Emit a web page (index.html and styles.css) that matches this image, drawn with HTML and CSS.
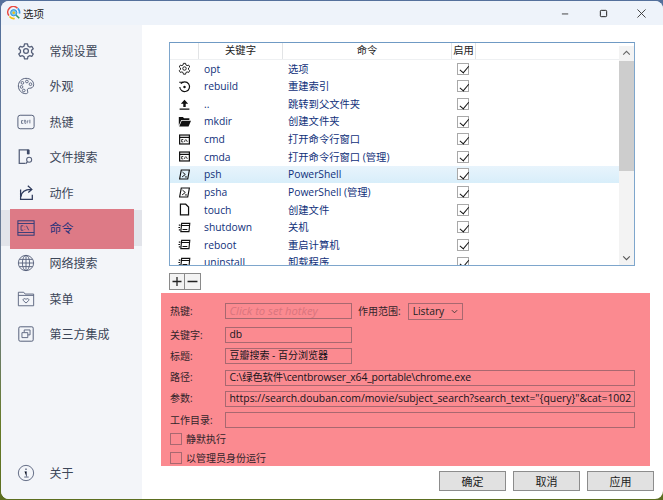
FILE: index.html
```html
<!DOCTYPE html>
<html lang="zh">
<head>
<meta charset="utf-8">
<title>选项</title>
<link rel="stylesheet" href="styles.css">
</head>
<body>
<svg class="defs" width="0" height="0" aria-hidden="true">
  <defs>
    <symbol id="i-gear" viewBox="0 0 24 24"><path fill="none" stroke="currentColor" stroke-width="1.700" stroke-linejoin="round" d="M10 2.500h4l.6 3 2.200 1.200 2.900-1 2 3.400-2.300 2v2.800l2.300 2-2 3.400-2.900-1-2.200 1.200-.6 3h-4l-.6-3-2.200-1.200-2.900 1-2-3.400 2.300-2v-2.800l-2.300-2 2-3.400 2.900 1 2.200-1.200z"/><circle cx="12" cy="12" r="3.200" fill="none" stroke="currentColor" stroke-width="1.700"/></symbol>
    <symbol id="i-console" viewBox="0 0 16 16"><rect x="2" y="2.500" width="12" height="11" fill="none" stroke="currentColor" stroke-width="1.500"/><path stroke="currentColor" stroke-width="1.500" d="M2 5.500h12"/><path fill="none" stroke="currentColor" d="M6.500 8h-2v3h2M8 11l1-3M10 8l1.500 3"/></symbol>
    <symbol id="i-ps" viewBox="0 0 16 16"><path fill="none" stroke="currentColor" stroke-width="1.400" d="M4 2.500h10l-2 11H2z"/><path fill="none" stroke="currentColor" stroke-width="1.200" d="M5.500 5l3.500 3-4 3M8.500 11h2.500"/></symbol>
    <symbol id="i-power" viewBox="0 0 16 16"><path fill="none" stroke="currentColor" stroke-width="1.400" d="M4.500 3h10l-1 10h-10z"/><path stroke="currentColor" stroke-width="1.400" d="M4.300 5.500h10M5.500 10.500h6M1 5h2M.5 8h2M1 11h2"/></symbol>
  </defs>
</svg>
<div class="window">
  <header class="titlebar">
    <div class="title">
      <svg class="logo" viewBox="0 0 16 16"><path fill="none" stroke="#e8483f" stroke-width="1.800" d="M2.200 11A6.500 6.500 0 0 1 12 2.500"/><path fill="none" stroke="#f4c20d" stroke-width="1.800" d="M2.800 12a6.500 6.500 0 0 0 6 2.300"/><path fill="none" stroke="#3b9be8" stroke-width="1.800" d="M12.300 2.800a6.500 6.500 0 0 1 2 6"/><circle cx="7.700" cy="7.700" r="3.600" fill="#7fc6ea" stroke="#1f8fd8"/><circle cx="7.700" cy="7.700" r="1.400" fill="#f4c20d"/><path stroke="#2f9a5b" stroke-width="1.800" d="M10.500 10.500l3.500 3.500"/></svg>
      <span>选项</span>
    </div>
    <div class="controls">
      <svg viewBox="0 0 10 10"><path stroke="#333" d="M1 5.500h7"/></svg>
      <svg viewBox="0 0 10 10"><rect x="1.500" y="1.500" width="7" height="7" rx="1" fill="none" stroke="#222" stroke-width="1.100"/></svg>
      <svg viewBox="0 0 10 10"><path stroke="#333" d="M.5.500l9 9M9.500.500l-9 9"/></svg>
    </div>
  </header>
  <div class="content">
    <nav class="sidebar">
      <a class="nav-item"><svg class="nav-icon"><use href="#i-gear"/></svg><span>常规设置</span></a>
      <a class="nav-item"><svg class="nav-icon" viewBox="0 0 20 20"><path fill="none" stroke="currentColor" stroke-width="1.100" d="M10 1.500c5 0 8.500 3 8.500 7 0 3-2.500 4-4.500 4-1.500 0-2.500.6-2.500 2 0 1 .5 1.500.5 2.500 0 1-1 1.500-2.200 1.500C5 18.500 1.500 14.500 1.500 10 1.500 5.500 5 1.500 10 1.500z"/><g fill="none" stroke="currentColor"><circle cx="6" cy="6.500" r="1.500"/><circle cx="11" cy="5" r="1.500"/><circle cx="15" cy="8" r="1.500"/><circle cx="5" cy="11" r="1.500"/><circle cx="7.500" cy="15" r="1.500"/></g></svg><span>外观</span></a>
      <a class="nav-item"><svg class="nav-icon" viewBox="0 0 20 20"><rect x="1" y="2.500" width="18" height="15" rx="2.500" fill="none" stroke="currentColor" stroke-width="1.100"/><path fill="none" stroke="currentColor" stroke-width=".9" d="M7 8.500H5v3h2M8.800 7.500v4h1M8 8.800h2M11.300 11.500V8.800h1.400M14.300 7.500v4"/></svg><span>热键</span></a>
      <a class="nav-item"><svg class="nav-icon" viewBox="0 0 20 20"><path fill="none" stroke="currentColor" stroke-width="1.400" d="M9 17H2.500V2h10v5"/><path fill="#3e4a68" d="M11 2h3v5h-3z"/><circle cx="13.500" cy="13" r="2.800" fill="none" stroke="currentColor" stroke-width="1.200"/><path stroke="currentColor" stroke-width="1.400" d="M11.500 15.500l-2 2"/></svg><span>文件搜索</span></a>
      <a class="nav-item"><svg class="nav-icon dark" viewBox="0 0 20 20"><path fill="none" stroke="currentColor" stroke-width="1.400" d="M4 6v11h13v-5M4.500 14c.5-5 4-8 11-8M12 2l4.500 4-4 3.500"/></svg><span>动作</span></a>
      <a class="nav-item active"><svg class="nav-icon" viewBox="0 0 20 20"><rect x="1" y="2" width="18" height="16" fill="none" stroke="currentColor" stroke-width="1.100"/><path stroke="currentColor" d="M1 5h18M1 15h18"/><path fill="none" stroke="currentColor" stroke-width=".9" d="M7 7.500H4.500v5H7M8.700 8.500v.6M8.700 11.500v.6M10.500 7.500l2.500 5"/></svg><span>命令</span></a>
      <a class="nav-item"><svg class="nav-icon" viewBox="0 0 20 20"><g fill="none" stroke="currentColor"><circle cx="10" cy="10" r="8.500"/><ellipse cx="10" cy="10" rx="4" ry="8.500"/><path d="M10 1.500v17M1.500 10h17M2.800 6h14.400M2.800 14h14.400"/></g></svg><span>网络搜索</span></a>
      <a class="nav-item"><svg class="nav-icon" viewBox="0 0 20 20"><path fill="none" stroke="currentColor" d="M1.500 17.500V2.500h6l1.500 2h9.500v13z"/><path stroke="currentColor" d="M1.500 6h17"/><path fill="none" stroke="currentColor" d="M10 14.500l-3-2.800c-1.200-1.500 1.500-3.200 3-1.200 1.500-2 4.200-.3 3 1.200z"/></svg><span>菜单</span></a>
      <a class="nav-item"><svg class="nav-icon" viewBox="0 0 20 20"><rect x="2" y="2" width="16" height="16" rx="1.500" fill="none" stroke="currentColor" stroke-width="1.100"/><path fill="none" stroke="currentColor" d="M8 8V5.500h6.500v5.500H12M5.500 8.500H12v5.500H5.500z"/></svg><span>第三方集成</span></a>
      <a class="nav-item about"><svg class="nav-icon" viewBox="0 0 20 20"><circle cx="10" cy="10" r="8.500" fill="none" stroke="currentColor"/><path stroke="currentColor" d="M8.500 8.500H10.500V14M8 14.500h5"/><path stroke="currentColor" stroke-width="1.500" d="M10 5v1.800"/></svg><span>关于</span></a>
    </nav>
    <main class="main">
      <section class="table">
        <div class="table-body">
          <div class="row head"><span></span><span>关键字</span><span>命令</span><span>启用</span></div>
          <div class="row"><svg class="ricon"><use href="#i-gear"/></svg><span>opt</span><span>选项</span><i class="check"></i></div>
          <div class="row"><svg class="ricon" viewBox="0 0 16 16"><path fill="none" stroke="currentColor" stroke-width="1.400" d="M3.500 4.500a6 6 0 1 1-1.300 4"/><path fill="currentColor" d="M1.500 2h5v1.500h-5z"/><circle cx="8" cy="8.500" r="1.500" fill="currentColor"/></svg><span>rebuild</span><span>重建索引</span><i class="check"></i></div>
          <div class="row"><svg class="ricon" viewBox="0 0 16 16"><path fill="currentColor" d="M8 2l4.500 5H9.500v4h-3V7H3.500zM2 13h12v1.500H2z"/></svg><span>..</span><span>跳转到父文件夹</span><i class="check"></i></div>
          <div class="row"><svg class="ricon" viewBox="0 0 16 16"><path fill="currentColor" d="M1 2.500h5l1.500 1.500H14v2H4L1 13zM4.500 7H16l-3 7H1.500z"/></svg><span>mkdir</span><span>创建文件夹</span><i class="check"></i></div>
          <div class="row"><svg class="ricon"><use href="#i-console"/></svg><span>cmd</span><span>打开命令行窗口</span><i class="check"></i></div>
          <div class="row"><svg class="ricon"><use href="#i-console"/></svg><span>cmda</span><span>打开命令行窗口 (管理)</span><i class="check"></i></div>
          <div class="row selected"><svg class="ricon"><use href="#i-ps"/></svg><span>psh</span><span>PowerShell</span><i class="check"></i></div>
          <div class="row"><svg class="ricon"><use href="#i-ps"/></svg><span>psha</span><span>PowerShell (管理)</span><i class="check"></i></div>
          <div class="row"><svg class="ricon" viewBox="0 0 16 16"><path fill="none" stroke="currentColor" stroke-width="1.500" d="M3 1.500h6.500L13 5v9.500H3z"/></svg><span>touch</span><span>创建文件</span><i class="check"></i></div>
          <div class="row"><svg class="ricon"><use href="#i-power"/></svg><span>shutdown</span><span>关机</span><i class="check"></i></div>
          <div class="row"><svg class="ricon"><use href="#i-power"/></svg><span>reboot</span><span>重启计算机</span><i class="check"></i></div>
          <div class="row"><svg class="ricon"><use href="#i-power"/></svg><span>uninstall</span><span>卸载程序</span><i class="check"></i></div>
        </div>
        <div class="scrollbar">
          <svg class="arrow" viewBox="0 0 10 10"><path fill="none" stroke="#666" d="M2 6l3-3 3 3"/></svg>
          <div class="thumb"></div>
          <svg class="arrow bottom" viewBox="0 0 10 10"><path fill="none" stroke="#555" d="M2 4l3 3 3-3"/></svg>
        </div>
      </section>
      <div class="addremove">
        <button class="square" aria-label="add"><svg viewBox="0 0 10 10"><path stroke="#222" stroke-width="1.300" d="M.500 5h9M5 .500v9"/></svg></button>
        <button class="square" aria-label="remove"><svg viewBox="0 0 10 10"><path stroke="#222" stroke-width="1.300" d="M.500 5h9"/></svg></button>
      </div>
      <form class="form">
        <div class="frow r1"><label>热键:</label><div class="input short hint">Click to set hotkey</div><label class="scope">作用范围:</label><div class="select">Listary<svg viewBox="0 0 8 8"><path fill="none" stroke="#333" d="M1 2.500l3 3 3-3"/></svg></div></div>
        <div class="frow"><label>关键字:</label><div class="input short">db</div></div>
        <div class="frow"><label>标题:</label><div class="input short cjk">豆瓣搜索 - 百分浏览器</div></div>
        <div class="frow"><label>路径:</label><div class="input tight">C:\绿色软件\centbrowser_x64_portable\chrome.exe</div></div>
        <div class="frow"><label>参数:</label><div class="input">https://search.douban.com/movie/subject_search?search_text="{query}"&amp;cat=1002</div></div>
        <div class="frow"><label>工作目录:</label><div class="input"></div></div>
        <div class="crow"><i class="box"></i><span>静默执行</span></div>
        <div class="crow"><i class="box"></i><span>以管理员身份运行</span></div>
      </form>
      <footer class="actions">
        <button class="btn">确定</button>
        <button class="btn">取消</button>
        <button class="btn">应用</button>
      </footer>
    </main>
  </div>
</div>
</body>
</html>
```
FILE: styles.css
```css
* { box-sizing: border-box; }
html, body { margin: 0; height: 100%; }
body {
  width: 663px;
  height: 500px;
  overflow: hidden;
  background: linear-gradient(#54709c 0%, #6f7f94 60%, #667a28 85%, #5c6e20 100%);
  font-family: "Open Sans", "Noto Sans CJK SC", sans-serif;
  font-size: 11px;
  color: #1b1b1b;
}
.defs { position: absolute; }
.window {
  width: 662px;
  height: 498px;
  margin: 1px 0 0 1px;
  border-radius: 8px;
  overflow: hidden;
  background: #fff;
  display: flex;
  flex-direction: column;
}
.titlebar {
  height: 24px;
  flex: none;
  background: #eef3fa;
  display: flex;
  justify-content: space-between;
  align-items: center;
  padding: 0 17px 0 6px;
}
.title { display: flex; align-items: center; gap: 2px; font-size: 10.5px; color: #222; }
.logo { width: 14px; height: 14px; }
.controls { display: flex; gap: 29px; }
.controls svg { width: 9px; height: 9px; }
.content { flex: 1; display: flex; min-height: 0; }
.sidebar {
  width: 141px;
  flex: none;
  background: #f3f5f9;
  padding-top: 8.4px;
  display: flex;
  flex-direction: column;
}
.nav-item {
  height: 35.4px;
  flex: none;
  display: flex;
  align-items: center;
  gap: 14.5px;
  padding-left: 16px;
  font-size: 12px;
  color: #3c4658;
  position: relative;
}
.nav-icon { width: 18px; height: 18px; color: #56607a; flex: none; }
.nav-icon.dark { color: #2e3a5c; }
.active { background: #e2e4ea; color: #23307a; }
.active .nav-icon { color: #2c3a78; position: relative; z-index: 1; }
.active span { position: relative; z-index: 1; }
.active::before {
  content: "";
  position: absolute;
  left: 9px;
  top: -1px;
  width: 124px;
  height: 40px;
  background: #dd7a86;
}
.about { margin-top: auto; margin-bottom: 8px; }
.main {
  flex: 1;
  padding: 17px 9px 0 19px;
  display: flex;
  flex-direction: column;
  min-width: 0;
}
.table {
  width: 466px;
  height: 224px;
  margin-left: 8px;
  border: 1px solid #7ea6cc;
  border-top-color: #6f9ac4;
  background: #fff;
  display: flex;
  overflow: hidden;
  flex: none;
}
.table-body { flex: 1; overflow: hidden; min-width: 0; }
.row {
  display: grid;
  grid-template-columns: 29px 84px 169px 24px;
  height: 17.62px;
  align-items: center;
  font-size: 10.3px;
  color: #10307a;
  line-height: 1;
}
.row > span { padding-left: 5px; white-space: nowrap; }
.row .ricon { width: 13px; height: 13px; color: #111; justify-self: center; }
.row.head {
  height: 17px;
  color: #222;
  border-bottom: 1px solid #eef0f2;
  background: #fff;
}
.row.head > span { height: 16px; line-height: 15px; text-align: center; padding: 0; border-right: 1px solid #e2e4e6; }
.row.selected { background: linear-gradient(#e8f4fc, #d8eefa); }
.check {
  justify-self: center;
  width: 12px;
  height: 12px;
  margin-right: 2px;
  border: 1px solid #a9a9a9;
  background: #fff;
  position: relative;
  display: block;
}
.check::after {
  content: "";
  position: absolute;
  left: 3.5px;
  top: .5px;
  width: 4px;
  height: 7.5px;
  border: solid #111;
  border-width: 0 1.8px 1.8px 0;
  transform: rotate(40deg);
}
.scrollbar {
  width: 15px;
  flex: none;
  background: #f3f3f3;
  display: flex;
  flex-direction: column;
  margin-top: 3px;
}
.arrow { width: 15px; height: 15px; flex: none; padding: 2px; }
.thumb { height: 110px; background: #cdcdcd; }
.arrow.bottom { margin-top: auto; }
.addremove { display: flex; margin: 7px 0 0 8px; flex: none; }
.square {
  width: 16px;
  height: 17px;
  padding: 2px;
  margin: 0;
  border: 1px solid #8a8a8a;
  background: #f3f3f3;
  display: flex;
  align-items: center;
  justify-content: center;
}
.square + .square { border-left: 0; }
.square svg { width: 11px; height: 11px; }
.form {
  width: 489px;
  height: 173px;
  margin-top: 3px;
  flex: none;
  background: #fb8a90;
  padding: 10px 15px 0 9px;
  color: #33242a;
  font-size: 10px;
  display: flex;
  flex-direction: column;
}
.frow { display: flex; align-items: center; height: 16px; flex: none; margin-bottom: 5.3px; }
.frow.r1 { margin-bottom: 8px; }
.frow label { width: 55px; flex: none; white-space: nowrap; margin-bottom: 2px; }
.input {
  flex: 1;
  height: 16px;
  border: 1px solid #a86870;
  padding: 0 3.500px;
  line-height: 13px;
  font-size: 10.4px;
  color: #14141a;
  white-space: nowrap;
  overflow: hidden;
}
.input.short { flex: 0 0 127px; }
.input.cjk { font-size: 10px; }
.input.tight { letter-spacing: -.15px; }
.input.hint { color: #d9757e; font-style: italic; font-size: 11.2px; }
.frow .scope { width: auto; margin-left: 6px; }
.select {
  width: 55px;
  height: 17px;
  margin-left: 7px;
  border: 1px solid #a86870;
  padding: 0 4px;
  display: flex;
  align-items: center;
  justify-content: space-between;
  font-size: 10.3px;
  color: #222;
}
.select svg { width: 7px; height: 7px; }
.crow { display: flex; align-items: center; gap: 4px; height: 12px; flex: none; margin-bottom: 7px; }
.crow span { margin-bottom: 2px; }
.box { width: 12px; height: 12px; border: 1px solid #a86870; display: block; flex: none; }
.actions { display: flex; justify-content: flex-end; gap: 7px; margin-top: 5px; flex: none; }
.btn {
  width: 67px;
  height: 20px;
  padding: 0;
  border: 1px solid #8c8c8c;
  background: #e1e1e1;
  font: inherit;
  font-size: 11px;
  color: #222;
}
```
